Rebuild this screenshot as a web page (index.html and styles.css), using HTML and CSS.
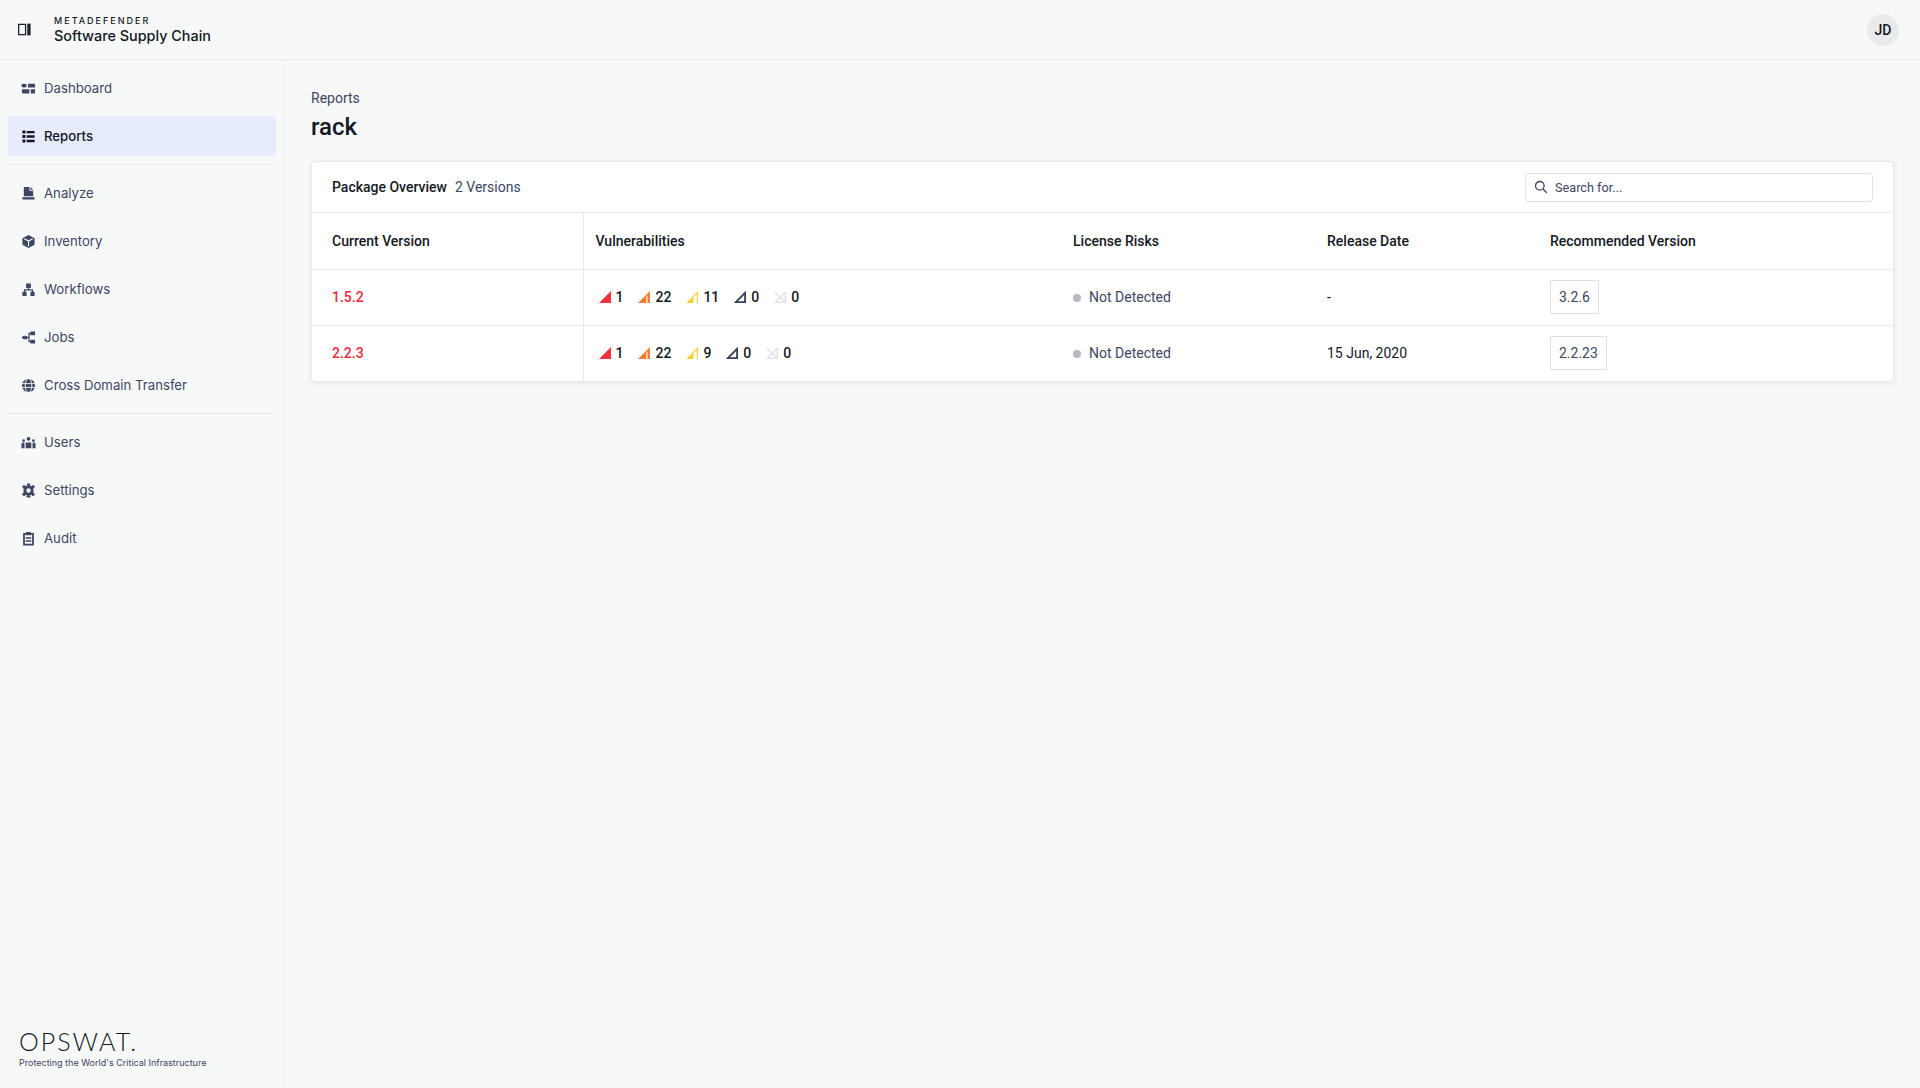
FILE: index.html
```html
<!DOCTYPE html>
<html lang="en">
<head>
    <meta charset="UTF-8">
    <meta name="viewport" content="width=device-width, initial-scale=1.0">
    <title>MetaDefender Software Supply Chain</title>
    <link rel="stylesheet" href="styles.css">
</head>
<body>
    <header class="topbar">
        <div class="brand">
            <svg class="panel-icon" viewBox="0 0 12 12"><path d="M0.6 1.200h6.400v9.600H0.600z" fill="none" stroke="currentColor" stroke-width="1.200"/><path d="M8.600 0.600h3v10.800h-3z" fill="currentColor"/></svg>
            <div class="brand-text">
                <div class="brand-top">METADEFENDER</div>
                <div class="brand-name">Software Supply Chain</div>
            </div>
        </div>
        <div class="avatar">JD</div>
    </header>
    <div class="layout">
        <aside class="sidebar">
            <nav class="nav">
                <a class="nav-item"><svg class="nav-icon" viewBox="0 0 16 16"><path d="M2.500 2.800h1.500a1.800 1.800 0 0 1 0 4.200H2.500a1.800 1.800 0 0 1 0-4.200zM7.500 2.800h6.500a1 1 0 0 1 1 1V7H7.500zM1 8.800h8v4.400H2a1 1 0 0 1-1-1zM10.500 8.800H15v3.400a1 1 0 0 1-1 1h-3.500z" fill="currentColor"/></svg>Dashboard</a>
                <a class="nav-item active"><svg class="nav-icon" viewBox="0 0 16 16"><path d="M1.500 1.500h3.200v3.200H1.500zM6 2h8.500v2.600H6zM1.500 6.400h3.200v3.200H1.500zM6 6.700h8.500v2.600H6zM1.500 11.300h3.200v3.200H1.500zM6 11.500h8.500v2.600H6z" fill="currentColor"/></svg>Reports</a>
                <div class="nav-line"></div>
                <a class="nav-item"><svg class="nav-icon" viewBox="0 0 16 16"><path d="M3 1h6v4h4v6H3zM10 1l3 3h-3zM1.500 12h13v1.500a1 1 0 0 1-1 1h-11a1 1 0 0 1-1-1z" fill="currentColor"/></svg>Analyze</a>
                <a class="nav-item"><svg class="nav-icon" viewBox="0 0 16 16"><path d="M8 1l6.500 3.500v7L8 15l-6.500-3.500v-7z" fill="currentColor"/><path d="M3.500 5L8 7.500 12.500 5M8 7.500V13" fill="none" stroke="#f7f9f9" stroke-width="1.200"/></svg>Inventory</a>
                <a class="nav-item"><svg class="nav-icon" viewBox="0 0 16 16"><path d="M5.500 1.500h5v5h-5zM1.500 10.500h4.500v4.500H1.500zM10 10.500h4.500v4.500H10z" fill="currentColor"/><path d="M8 6v2.500M3.800 11V8.500h8.400V11" fill="none" stroke="currentColor" stroke-width="1.300"/></svg>Workflows</a>
                <a class="nav-item"><svg class="nav-icon" viewBox="0 0 16 16"><path d="M10 1.500h5v4h-5zM10 10.500h5v4h-5zM3.500 5.500l-3 2.500 3 2.500z" fill="currentColor"/><circle cx="5" cy="8" r="2" fill="currentColor"/><path d="M6 8h2.500M11 3.500H8.500v9H11" fill="none" stroke="currentColor" stroke-width="1.300"/></svg>Jobs</a>
                <a class="nav-item"><svg class="nav-icon" viewBox="0 0 16 16"><circle cx="8" cy="8" r="7" fill="currentColor"/><path d="M1 6h14M1 10h14" stroke="#f7f9f9" stroke-width="1"/><ellipse cx="8" cy="8" rx="3.500" ry="7.500" fill="none" stroke="#f7f9f9" stroke-width="1"/></svg>Cross Domain Transfer</a>
                <div class="nav-line"></div>
                <a class="nav-item"><svg class="nav-icon" viewBox="0 0 16 16"><circle cx="8" cy="4" r="2" fill="currentColor"/><circle cx="2.800" cy="6" r="1.400" fill="currentColor"/><circle cx="13.200" cy="6" r="1.400" fill="currentColor"/><path d="M5 8h6v6H5zM0.500 9.500a2 2 0 0 1 3.200-1V14H0.500zM15.500 9.500a2 2 0 0 0-3.200-1V14h3.200z" fill="currentColor"/></svg>Users</a>
                <a class="nav-item"><svg class="nav-icon" viewBox="0 0 16 16"><circle cx="8" cy="8" r="3.900" fill="none" stroke="currentColor" stroke-width="3"/><path d="M6.500 0.500h3l.5 2.500h-4zM6 13l-.2 2.500h4.400L10 13zM1 3.500l2.500-1.500 2 2-2.500 2.500zM15 3.500L12.500 2l-2 2 2.500 2.500zM1 12.500L3.500 14l2-2-2.500-2.500zM15 12.500L12.500 14l-2-2 2.500-2.500z" fill="currentColor"/></svg>Settings</a>
                <a class="nav-item"><svg class="nav-icon" viewBox="0 0 16 16"><path d="M3.200 3h9.600v11.500H3.200z" fill="none" stroke="currentColor" stroke-width="1.900"/><path d="M5.500 1h5v3.500h-5zM5 6.600h6v1.600H5zM5 9.800h6v1.600H5z" fill="currentColor"/></svg>Audit</a>
            </nav>
            <div class="sidebar-foot">
                <div class="logo">OPSWAT.</div>
                <div class="tagline">Protecting the World's Critical Infrastructure</div>
            </div>
        </aside>
        <main class="content">
            <div class="crumb">Reports</div>
            <h1 class="title">rack</h1>
            <section class="card">
                <div class="card-head">
                    <div><span class="card-title">Package Overview</span><span class="card-count">2 Versions</span></div>
                    <div class="search">
                        <svg class="search-icon" viewBox="0 0 14 14"><circle cx="5.800" cy="5.800" r="4.300" fill="none" stroke="currentColor" stroke-width="1.300"/><path d="M9 9l3.800 3.800" stroke="currentColor" stroke-width="1.300"/></svg>
                        <span>Search for...</span>
                    </div>
                </div>
                <table class="versions">
                    <thead>
                        <tr>
                            <th class="col-version">Current Version</th>
                            <th class="col-vuln">Vulnerabilities</th>
                            <th class="col-license">License Risks</th>
                            <th class="col-date">Release Date</th>
                            <th>Recommended Version</th>
                        </tr>
                    </thead>
                    <tbody>
                        <tr>
                            <td class="col-version version-link">1.5.2</td>
                            <td class="col-vuln">
                                <div class="sev-list">
                                    <span class="sev"><svg class="sev-icon" viewBox="0 0 12 12"><path d="M0 12L12 0v12z" fill="#ee3342"/></svg>1</span>
                                    <span class="sev"><svg class="sev-icon" viewBox="0 0 12 12"><path d="M0 12L12 0v12H9.500V4.500L8.300 5.700V12z" fill="#f08030"/></svg>22</span>
                                    <span class="sev"><svg class="sev-icon" viewBox="0 0 12 12"><path d="M0 12L12 0v12H10.800V3L7.500 6.300V12z" fill="#fbd13c"/></svg>11</span>
                                    <span class="sev"><svg class="sev-icon" viewBox="0 0 12 12"><path d="M1.800 11.100L11.100 1.800v9.300z" fill="none" stroke="#353f5e" stroke-width="1.800"/></svg>0</span>
                                    <span class="sev"><svg class="sev-icon" viewBox="0 0 12 12"><path d="M1.500 11.300L11.300 1.500v9.800zM1 1l10.500 10.500" fill="none" stroke="#dfe1e6" stroke-width="1.300"/></svg>0</span>
                                </div>
                            </td>
                            <td class="license-text"><span class="dot"></span>Not Detected</td>
                            <td>-</td>
                            <td><span class="tag">3.2.6</span></td>
                        </tr>
                        <tr>
                            <td class="col-version version-link">2.2.3</td>
                            <td class="col-vuln">
                                <div class="sev-list">
                                    <span class="sev"><svg class="sev-icon" viewBox="0 0 12 12"><path d="M0 12L12 0v12z" fill="#ee3342"/></svg>1</span>
                                    <span class="sev"><svg class="sev-icon" viewBox="0 0 12 12"><path d="M0 12L12 0v12H9.500V4.500L8.300 5.700V12z" fill="#f08030"/></svg>22</span>
                                    <span class="sev"><svg class="sev-icon" viewBox="0 0 12 12"><path d="M0 12L12 0v12H10.800V3L7.500 6.300V12z" fill="#fbd13c"/></svg>9</span>
                                    <span class="sev"><svg class="sev-icon" viewBox="0 0 12 12"><path d="M1.800 11.100L11.100 1.800v9.300z" fill="none" stroke="#353f5e" stroke-width="1.800"/></svg>0</span>
                                    <span class="sev"><svg class="sev-icon" viewBox="0 0 12 12"><path d="M1.500 11.300L11.300 1.500v9.800zM1 1l10.500 10.500" fill="none" stroke="#dfe1e6" stroke-width="1.300"/></svg>0</span>
                                </div>
                            </td>
                            <td class="license-text"><span class="dot"></span>Not Detected</td>
                            <td>15 Jun, 2020</td>
                            <td><span class="tag">2.2.23</span></td>
                        </tr>
                    </tbody>
                </table>
            </section>
        </main>
    </div>
</body>
</html>
```

FILE: styles.css
```css
* {
    box-sizing: border-box;
}

body {
    margin: 0;
    height: 1088px;
    display: flex;
    flex-direction: column;
    background-color: #f7f9f9;
    color: #141823;
    font-family: Roboto, "Liberation Sans", sans-serif;
    font-size: 14px;
}

.topbar {
    height: 60px;
    flex: none;
    display: flex;
    justify-content: space-between;
    align-items: center;
    padding: 0 21px 0 18px;
    border-bottom: 1px solid #e8ebed;
}

.brand {
    display: flex;
    align-items: center;
    gap: 23px;
}

.panel-icon {
    width: 13px;
    height: 13px;
    color: #1c2130;
}

.brand-text {
    padding-top: 2px;
}

.brand-top {
    font-family: Inter, sans-serif;
    font-size: 9px;
    font-weight: 500;
    letter-spacing: 2px;
    line-height: 11px;
}

.brand-name {
    font-family: Inter, sans-serif;
    font-size: 14.400px;
    font-weight: 500;
    line-height: 20px;
}

.avatar {
    width: 32px;
    height: 32px;
    border-radius: 50%;
    background-color: #e8eaec;
    display: flex;
    justify-content: center;
    align-items: center;
    font-weight: 500;
    font-size: 14px;
}

.layout {
    flex: 1;
    display: flex;
}

.sidebar {
    width: 285px;
    flex: none;
    display: flex;
    flex-direction: column;
    justify-content: space-between;
    padding: 8px 8px 18px;
    border-right: 1px solid #eceef0;
}

.nav {
    display: flex;
    flex-direction: column;
    gap: 8px;
}

.nav-item {
    height: 40px;
    display: flex;
    align-items: center;
    gap: 8px;
    padding-left: 12px;
    border-radius: 4px;
    color: #3d4663;
    font-family: Inter, sans-serif;
    font-size: 13.200px;
}

.nav-item.active {
    background-color: #e7ecfd;
    color: #141823;
    font-weight: 500;
}

.nav-icon {
    width: 15px;
    height: 15px;
    margin-left: 1px;
    flex: none;
}

.nav-line {
    height: 1px;
    background-color: #e8ebed;
}

.sidebar-foot {
    padding-left: 11px;
}

.logo {
    font-family: Lato, sans-serif;
    font-size: 25px;
    font-weight: 300;
    letter-spacing: 2px;
    line-height: 24px;
    color: #141823;
}

.tagline {
    margin-top: 3px;
    font-family: Inter, sans-serif;
    font-size: 9px;
    line-height: 14px;
    color: #3d4663;
}

.content {
    flex: 1;
    padding: 29px 26px 0 26px;
}

.crumb {
    line-height: 18px;
    color: #3d4663;
}

.title {
    margin: 4px 0 18px;
    font-size: 24px;
    font-weight: 500;
    line-height: 32px;
}

.card {
    background-color: #fff;
    border: 1px solid #e8ebed;
    border-radius: 4px;
    box-shadow: 0 2px 6px rgba(20, 24, 35, 0.08);
}

.card-head {
    height: 51px;
    display: flex;
    justify-content: space-between;
    align-items: center;
    padding: 0 20px;
    border-bottom: 1px solid #e8ebed;
}

.card-title {
    font-weight: 500;
}

.card-count {
    margin-left: 8px;
    color: #3d4663;
}

.search {
    width: 348px;
    height: 29px;
    display: flex;
    align-items: center;
    gap: 7px;
    padding-left: 8px;
    border: 1px solid #e0e3e6;
    border-radius: 3px;
    color: #3d4663;
    font-size: 12.700px;
}

.search-icon {
    width: 14px;
    height: 14px;
}

.versions {
    width: 100%;
    border-collapse: collapse;
}

.versions th {
    height: 56px;
    padding: 0 12px;
    text-align: left;
    font-weight: 500;
    border-bottom: 1px solid #e8ebed;
}

.versions td {
    height: 56px;
    padding: 0 12px;
    border-bottom: 1px solid #e8ebed;
}

.versions tr:last-child td {
    border-bottom: none;
}

.versions .col-version {
    width: 271px;
    padding-left: 20px;
    border-right: 1px solid #e8ebed;
}

.col-vuln {
    width: 478px;
}

.col-license {
    width: 254px;
}

.col-date {
    width: 223px;
}

.license-text {
    color: #3d4663;
}

.version-link {
    color: #ee2a3d;
    font-weight: 500;
}

.sev-list {
    display: flex;
    gap: 13px;
    margin-left: 1px;
    font-weight: 500;
}

.sev {
    display: flex;
    align-items: center;
    gap: 3px;
}

.sev-icon {
    width: 12px;
    height: 12px;
    margin: 2px;
}

.dot {
    display: inline-block;
    width: 8px;
    height: 8px;
    margin-right: 8px;
    border-radius: 50%;
    background-color: #b5b9c2;
}

.tag {
    display: inline-block;
    height: 34px;
    padding: 0 8px;
    border: 1px solid #dfe1e6;
    color: #3d4663;
    line-height: 32px;
}
```
